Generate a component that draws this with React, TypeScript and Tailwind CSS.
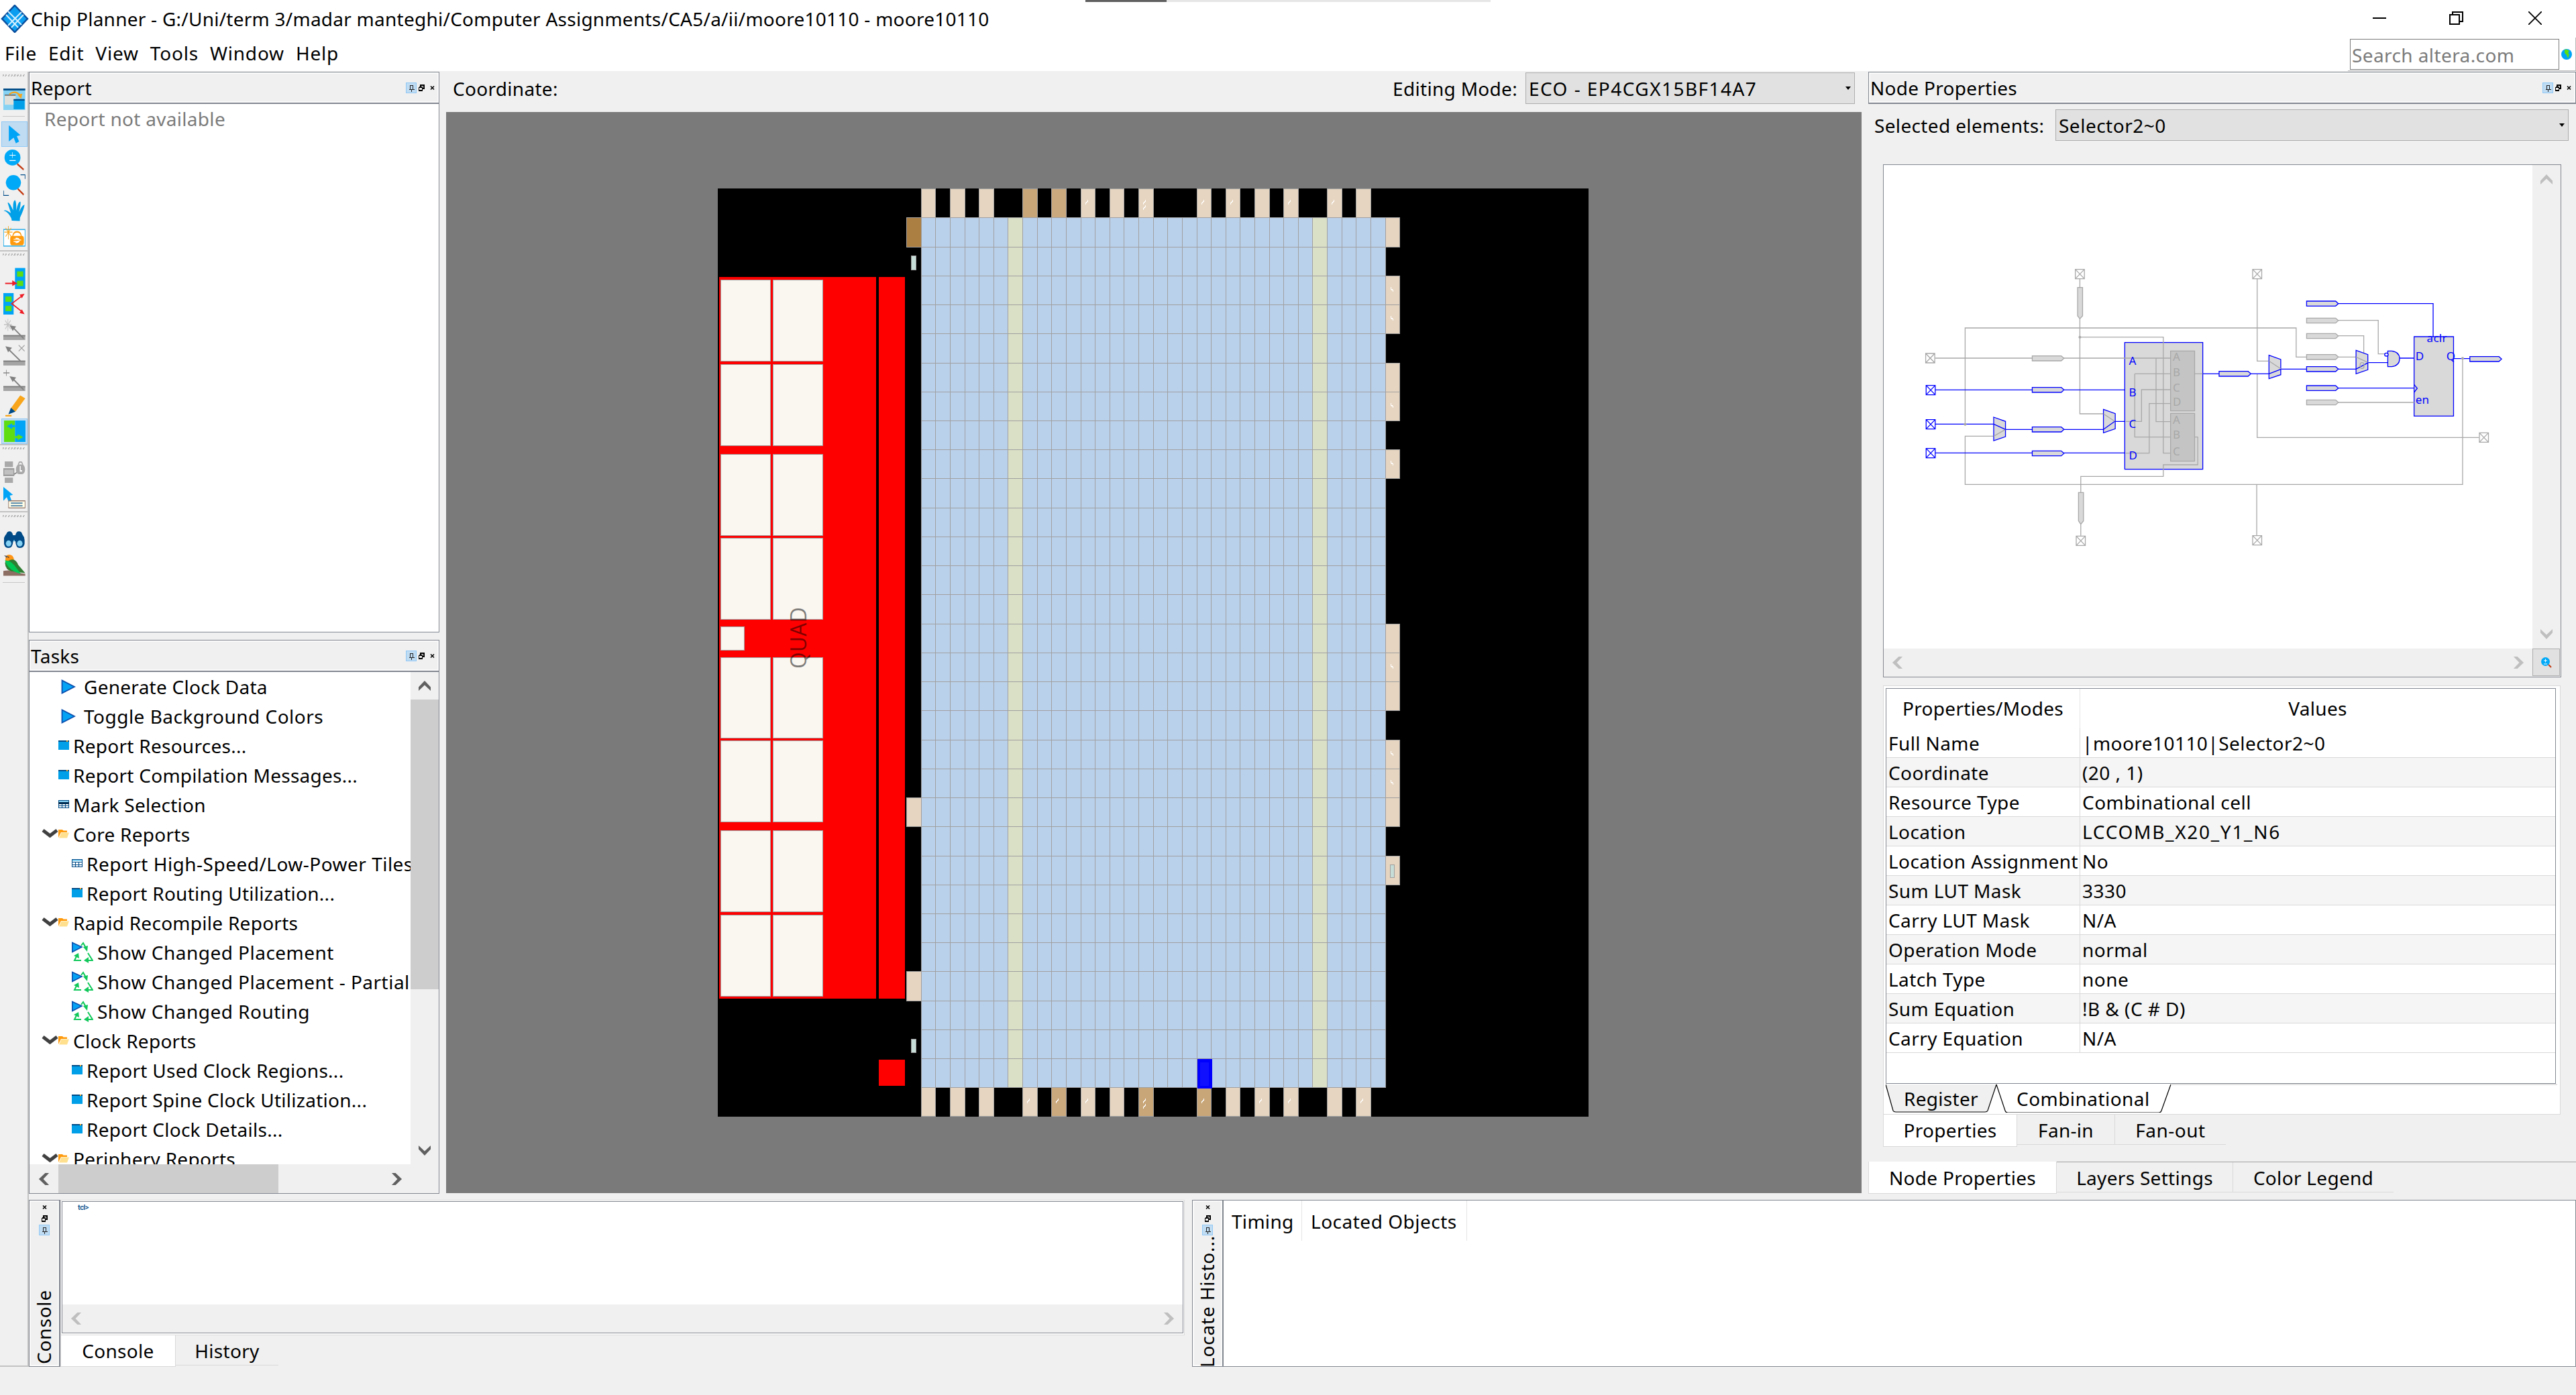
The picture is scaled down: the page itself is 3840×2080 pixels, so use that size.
import React from "react";

const GRAY = "#a0a0a0";

/* ---------- small shared glyphs ---------- */

function Chevron({ dir, color = "#606060", w = 18, h = 17 }: { dir: "up" | "down" | "left" | "right"; color?: string; w?: number; h?: number }) {
  const rot = { up: 0, right: 90, down: 180, left: 270 }[dir];
  return (
    <svg width={w} height={h} viewBox="0 0 18 18" preserveAspectRatio="none" className="shrink-0">
      <polygon points="0,11 9,1 18,11 18,17 9,8 0,17" fill={color} transform={`rotate(${rot} 9 9)`} />
    </svg>
  );
}

function PinIcon() {
  return (
    <span className="flex h-4 w-4 shrink-0 items-center justify-center border border-[#90c8f6] bg-[#c0dcf3]">
      <svg width="10" height="12" viewBox="0 0 10 12" shapeRendering="crispEdges">
        <path d="M3.5 8V2.500H7.500V8M1.500 8.500H9.500M5.500 8.500V12" stroke="#222" fill="none" />
      </svg>
    </span>
  );
}
function RestoreIcon() {
  return (
    <svg width="9" height="10" viewBox="0 0 9 10" className="shrink-0" shapeRendering="crispEdges">
      <path d="M3 3V1H8V6H6M3 1.500H8M0.500 4.500H5.500V9H0.500ZM0.500 4H5.500" stroke="#000" fill="none" strokeWidth="1.2" />
    </svg>
  );
}
function XIcon() {
  return (
    <svg width="7" height="6" viewBox="0 0 7 6" className="shrink-0">
      <path d="M1 .5L6 5.500M6 .5L1 5.500" stroke="#000" strokeWidth="1.500" />
    </svg>
  );
}

function DockHeader({ title }: { title: string }) {
  return (
    <div className="flex h-[47px] shrink-0 items-center border-b-2 border-[#828790] bg-[#f0f0f0] pr-[6px] pl-[2px] shadow-[inset_0_0_0_2px_#fafafa]">
      <span className="grow">{title}</span>
      <PinIcon />
      <span className="ml-[3px] flex"><RestoreIcon /></span>
      <span className="ml-[8px] flex"><XIcon /></span>
    </div>
  );
}

function VerticalTitle({ title }: { title: string }) {
  return (
    <div className="flex w-[46px] shrink-0 flex-col items-center border-r-2 border-[#828790] bg-[#f0f0f0] pt-[7px] pb-px shadow-[inset_0_0_0_2px_#fafafa]">
      <XIcon />
      <span className="mt-[9px] flex"><RestoreIcon /></span>
      <span className="mt-[4px] flex"><PinIcon /></span>
      <div className="mt-auto rotate-180 pt-[2px] pl-[3px] leading-[40px] tracking-[0.8px] [writing-mode:vertical-rl]">{title}</div>
    </div>
  );
}

/* ---------- left tool bar ---------- */

function Tool({ y, h = 57, on, children }: { y: number; h?: number; on?: boolean; children: React.ReactNode }) {
  return (
    <div className={on ? "ml-[2px] flex h-[38px] w-[39px] items-center justify-center border border-[#90c8f6] bg-[#c0dcf3]" : "ml-[2px] flex h-[38px] w-[39px] items-center justify-center"}>
      <svg width="33" height="32" viewBox={`15 ${y} 97 ${h}`} preserveAspectRatio="none">{children}</svg>
    </div>
  );
}
const Handle = () => (
  <div className="mx-[4px] h-[3px] shrink-0 bg-[repeating-linear-gradient(115deg,#b8b8b8_0px,#b8b8b8_2px,#f0f0f0_2px,#f0f0f0_4px)]" />
);

function ToolBar() {
  return (
    <div className="flex h-[1931px] w-[43px] shrink-0 flex-col border-r-2 border-b-2 border-[#c3c3c3] bg-[#f0f0f0]">
      <div className="h-[268px] border-b-2 border-[#c3c3c3] pt-[4px]">
        <Handle />
        <div className="mt-[15px]">
          <Tool y={57}>
            <rect x="15" y="57" width="96" height="57" fill="#85d2f4" />
            <rect x="15" y="57" width="96" height="5" fill="#004b87" />
            <rect x="21" y="74" width="48" height="26" fill="#dfe0dc" />
            <rect x="21" y="73" width="48" height="3" fill="#666" />
            <path d="M41 72Q66 60 92 76" stroke="#f8a51b" strokeWidth="4" fill="none" />
            <path d="M76 73L98 71L93 84Z" fill="#f8a51b" />
            <rect x="60" y="86" width="48" height="26" fill="#009fe8" />
            <rect x="60" y="85" width="48" height="4" fill="#004b87" />
          </Tool>
        </div>
        <div className="mx-[4px] mt-[6px] mb-[7px] h-px bg-[#c8c8c8]" />
        <Tool y={152} on>
          <path d="M39 157L90 183L74 186L84 200L70 205L60 190L39 200Z" fill="#00a4f6" />
        </Tool>
        <Tool y={217}>
          <ellipse cx="55" cy="240" rx="35" ry="21" fill="#00a9f8" />
          <path d="M55 226V241M42 234H69M42 248H69" stroke="#fff" strokeWidth="2" />
          <path d="M76 257L104 272" stroke="#c23a12" strokeWidth="5" />
        </Tool>
        <Tool y={287}>
          <ellipse cx="59" cy="309" rx="33" ry="20" fill="#00a9f8" />
          <path d="M78 325L104 341" stroke="#c23a12" strokeWidth="5" />
          <path d="M90 288H110V299M16 330V343H39" stroke="#004b87" strokeWidth="2.500" fill="none" />
        </Tool>
        <Tool y={354}>
          <path d="M52 409L50 403Q35 385 17 383Q22 378 48 389L34 362Q39 357 58 382Q56 356 66 355Q72 357 72 382Q80 357 90 359Q92 366 84 386Q98 367 108 367Q104 382 88 401L87 410Z" fill="#00a0e8" />
        </Tool>
        <Tool y={423}>
          <rect x="16" y="434" width="94" height="44" fill="#fff" stroke="#1ba8e8" strokeWidth="2.500" />
          <path d="M37 425V460M19 441H55M25 430L49 453M49 430L25 453" stroke="#f8a51b" strokeWidth="2.500" />
          <rect x="45" y="451" width="60" height="25" rx="8" fill="#ff9a0c" />
          <path d="M56 453Q58 440 75 440Q92 440 94 453" stroke="#ff9a0c" strokeWidth="4" fill="none" />
          <path d="M60 460H70V457Q84 456 86 462H93M60 466H70V469Q84 469 86 463" stroke="#fff" strokeWidth="2" fill="#fff" />
        </Tool>
      </div>
      <div className="h-[289px] border-b-2 border-[#c3c3c3] pt-[3px]">
        <Handle />
        <div className="h-[15px]" />
        <Tool y={532}>
          <rect x="66" y="533" width="45" height="57" fill="#00a4f6" />
          <rect x="75" y="542" width="27" height="14" fill="#5ede12" />
          <rect x="75" y="567" width="27" height="14" fill="#5ede12" />
          <path d="M23 574H60" stroke="#ee1c25" strokeWidth="3.500" />
          <path d="M54 566L76 574L54 581Z" fill="#ee1c25" />
        </Tool>
        <Tool y={600}>
          <rect x="15" y="600" width="45" height="57" fill="#00a4f6" />
          <rect x="24" y="609" width="27" height="14" fill="#5ede12" />
          <rect x="24" y="634" width="27" height="14" fill="#5ede12" />
          <path d="M98 607L52 628L98 650" stroke="#ee1c25" strokeWidth="3.500" fill="none" />
          <path d="M108 602L86 604L96 614ZM108 656L86 653L96 643Z" fill="#ee1c25" />
        </Tool>
        <Tool y={667}>
          <rect x="15" y="711" width="96" height="13" fill="#a5a5a5" />
          <rect x="15" y="711" width="96" height="3" fill="#7d7d7d" />
          <path d="M104 720L56 690" stroke="#808080" strokeWidth="4" />
          <path d="M42 685L71 688L56 700Z" fill="#808080" />
          <path d="M35 668V700M18 683H52M23 672L47 695M47 672L23 695" stroke="#c0c0c0" strokeWidth="2.500" />
        </Tool>
        <Tool y={735}>
          <rect x="15" y="779" width="96" height="14" fill="#a5a5a5" />
          <rect x="15" y="779" width="96" height="3" fill="#7d7d7d" />
          <path d="M90 780L36 748" stroke="#808080" strokeWidth="4" />
          <path d="M24 741L53 745L36 757Z" fill="#808080" />
          <path d="M82 738L108 754M108 738L82 754" stroke="#a0a0a0" strokeWidth="2.500" />
        </Tool>
        <Tool y={803}>
          <rect x="15" y="847" width="96" height="13" fill="#a5a5a5" />
          <rect x="15" y="847" width="96" height="3" fill="#7d7d7d" />
          <path d="M104 857L56 827" stroke="#808080" strokeWidth="4" />
          <path d="M42 821L71 824L56 836Z" fill="#808080" />
          <path d="M28 804V820M15 812H42" stroke="#888" strokeWidth="2.500" />
        </Tool>
        <Tool y={870}>
          <path d="M48 905L89 871L111 879L68 914Z" fill="#f8a51b" />
          <path d="M48 904L68 914L37 921Z" fill="#004b87" />
          <rect x="24" y="923" width="27" height="4" fill="#f8a51b" />
        </Tool>
        <Tool y={941} on>
          <rect x="18" y="941" width="48" height="57" fill="#5ede12" />
          <rect x="66" y="941" width="48" height="57" fill="#00a4f6" />
          <path d="M30 956L54 948V953H66V959H54V964Z" fill="#00a4f6" />
          <path d="M102 985L78 977V982H66V988H78V993Z" fill="#5ede12" />
        </Tool>
      </div>
      <div className="h-[100px] border-b-2 border-[#c3c3c3] pt-[3px]">
        <Handle />
        <div className="h-[15px]" />
        <Tool y={1049}>
          <rect x="21" y="1049" width="36" height="15" fill="#a9a9a9" />
          <rect x="21" y="1092" width="36" height="15" fill="#a9a9a9" />
          <rect x="17" y="1069" width="44" height="17" fill="#c0c0c0" stroke="#9a9a9a" strokeWidth="4" />
          <path d="M62 1083L78 1077" stroke="#808080" strokeWidth="3" />
          <rect x="70" y="1057" width="40" height="26" rx="13" fill="#a9a9a9" />
          <path d="M80 1060Q82 1050 90 1050Q98 1050 101 1060" stroke="#a9a9a9" strokeWidth="4" fill="none" />
          <path d="M89 1061V1074H97" stroke="#fff" strokeWidth="4" fill="none" />
        </Tool>
        <Tool y={1117}>
          <path d="M15 1117L57 1138L43 1140L51 1154L38 1156L30 1144L15 1154Z" fill="#00a4f6" />
          <rect x="38" y="1154" width="72" height="19" fill="#fffde8" stroke="#8d6e63" strokeWidth="2.500" />
          <path d="M48 1160H99M48 1167H99" stroke="#004b87" strokeWidth="2" />
        </Tool>
      </div>
      <div className="pt-[4px]">
        <Handle />
        <div className="h-[15px]" />
        <Tool y={1227}>
          <path d="M18 1262V1250Q22 1244 28 1240Q32 1233 42 1233Q54 1233 57 1243H68Q71 1233 83 1233Q95 1233 98 1241Q108 1248 108 1256V1266Q104 1277 86 1277Q70 1277 68 1259H58Q56 1277 38 1277Q22 1277 18 1266Z" fill="#004b87" />
          <ellipse cx="38" cy="1265" rx="12" ry="8" fill="#85d2f4" />
          <ellipse cx="87" cy="1265" rx="12" ry="8" fill="#85d2f4" />
          <circle cx="62" cy="1258" r="2.500" fill="#85d2f4" />
        </Tool>
        <Tool y={1297}>
          <path d="M15 1340Q50 1336 80 1345L111 1348V1353H15Z" fill="#8d6e63" />
          <path d="M24 1310Q24 1297 40 1297Q58 1297 62 1310L40 1325Q24 1325 24 1312Z" fill="#ff9414" />
          <path d="M18 1299L36 1301L30 1306Z" fill="#555" />
          <path d="M22 1318Q24 1338 50 1341L88 1344L111 1346L80 1324Q68 1306 46 1311Z" fill="#2e7d32" />
          <path d="M22 1312Q44 1312 62 1324L92 1348Q60 1344 38 1330Q26 1322 22 1312Z" fill="#00c853" />
          <circle cx="38" cy="1304" r="2" fill="#333" />
        </Tool>
      </div>
      <div className="mx-[4px] mt-[6px] h-px bg-[#c8c8c8]" />
    </div>
  );
}

/* ---------- tasks ---------- */

type Kind = "play" | "doc" | "table" | "darkTable" | "folder" | "recycle";
type Task = { kind: Kind; level: number; label: string; wide?: boolean };

const TASKS: Task[] = [
  { kind: "play", level: 0, label: "Generate Clock Data" },
  { kind: "play", level: 0, label: "Toggle Background Colors", wide: true },
  { kind: "doc", level: 0, label: "Report Resources..." },
  { kind: "doc", level: 0, label: "Report Compilation Messages..." },
  { kind: "darkTable", level: 0, label: "Mark Selection" },
  { kind: "folder", level: 0, label: "Core Reports" },
  { kind: "table", level: 1, label: "Report High-Speed/Low-Power Tiles", wide: true },
  { kind: "doc", level: 1, label: "Report Routing Utilization..." },
  { kind: "folder", level: 0, label: "Rapid Recompile Reports" },
  { kind: "recycle", level: 1, label: "Show Changed Placement", wide: true },
  { kind: "recycle", level: 1, label: "Show Changed Placement - Partial", wide: true },
  { kind: "recycle", level: 1, label: "Show Changed Routing", wide: true },
  { kind: "folder", level: 0, label: "Clock Reports" },
  { kind: "doc", level: 1, label: "Report Used Clock Regions..." },
  { kind: "doc", level: 1, label: "Report Spine Clock Utilization..." },
  { kind: "doc", level: 1, label: "Report Clock Details..." },
  { kind: "folder", level: 0, label: "Periphery Reports" },
];

function TaskIcon({ kind }: { kind: Kind }) {
  if (kind === "play")
    return (
      <svg width="32" height="24" viewBox="0 0 32 24">
        <path d="M5.500 2.500V21.500L24 12Z" fill="#06a3f5" stroke="#0b4fae" strokeWidth="1.800" />
      </svg>
    );
  if (kind === "doc")
    return (
      <svg width="16" height="16" viewBox="0 0 16 16" className="mb-[3px]">
        <rect y="1" width="16" height="14" fill="#009fe8" />
        <rect y="1" width="16" height="2" fill="#004b87" />
        <rect x="12" y="1" width="2" height="2" fill="#f8a51b" />
      </svg>
    );
  if (kind === "table" || kind === "darkTable")
    return (
      <svg width="16" height="14" viewBox="0 0 16 14" className="mb-[3px]" shapeRendering="crispEdges">
        <rect x=".5" y="1.500" width="15" height="11" fill="#fff" stroke="#004b87" />
        <rect x="1" y="2" width="14" height="2" fill="#85d2f4" />
        <path d="M0 5.500H16M0 9.500H16M5.500 5V13M10.500 5V13" stroke="#004b87" />
        {kind === "darkTable" && <rect x="0" y="4" width="16" height="3" fill="#002b50" />}
      </svg>
    );
  if (kind === "folder")
    return (
      <svg width="16" height="14" viewBox="0 0 16 14" className="mb-[2px]">
        <path d="M0 13V1H6L7.500 2.500H13V5H4Z" fill="#ff9a0c" />
        <path d="M1 13.500L4.500 5.500H16L13 13.500Z" fill="#ffe08f" />
      </svg>
    );
  return (
    <svg width="32" height="32" viewBox="0 0 32 32">
      <g stroke="#10c85a" strokeWidth="2" fill="none">
        <path d="M14 6L17 2L22 11M24 17L31 28H19M14 28H4L8 20" />
      </g>
      <path d="M17 8L24 6L23 15ZM25 23V32L18 28ZM3 21L10 17L11 25Z" fill="#10c85a" />
      <path d="M.8 1.500V15.500L15 8Z" fill="#06a3f5" stroke="#0b4fae" strokeWidth="1.600" />
    </svg>
  );
}

function TaskRow({ t }: { t: Task }) {
  return (
    <div className="flex h-[44px] shrink-0 items-center whitespace-pre">
      <span className={t.level ? "flex w-[63px] shrink-0" : "flex w-[43px] shrink-0 justify-end"}>
        {t.kind === "folder" && (
          <svg width="25" height="16" viewBox="0 0 25 16" className="mb-[2px]">
            <path d="M2 3L12.500 11L23 3" stroke="#404040" strokeWidth="5" fill="none" />
          </svg>
        )}
      </span>
      <span className="flex shrink-0"><TaskIcon kind={t.kind} /></span>
      <span className={t.wide ? "ml-[6px] tracking-[0.48px]" : "ml-[6px] tracking-[0.27px]"}>{t.label}</span>
    </div>
  );
}

function TasksDock() {
  return (
    <div className="mt-[11px] flex h-[826px] flex-col border border-[#828790] bg-[#f0f0f0]">
      <DockHeader title="Tasks" />
      <div className="flex h-[734px] shrink-0">
        <div className="flex w-[568px] shrink-0 flex-col overflow-hidden bg-white">
          {TASKS.map((t, i) => <TaskRow key={i} t={t} />)}
        </div>
        <div className="flex grow flex-col items-center justify-between bg-[#f0f0f0]">
          <span className="flex h-[41px] items-center"><Chevron dir="up" /></span>
          <div className="h-[432px] w-full bg-[#cdcdcd]" />
          <div className="grow" />
          <span className="flex h-[42px] items-center"><Chevron dir="down" /></span>
        </div>
      </div>
      <div className="flex grow items-center pr-[41px]">
        <span className="flex w-[43px] justify-center"><Chevron dir="left" w={17} h={18} /></span>
        <div className="h-full w-[328px] bg-[#cdcdcd]" />
        <div className="grow" />
        <span className="flex w-[43px] justify-center"><Chevron dir="right" w={17} h={18} /></span>
      </div>
    </div>
  );
}

/* ---------- chip floor plan ---------- */

const COL = 21.62;
const ROW = 43.235;
const cx = (i: number) => Math.floor(303.25 + COL * i);
const ry = (i: number) => Math.floor(43.84 + ROW * i);
const LIGHT = "#e6d5c0";
const TAN = "#c8a678";

const TOP: [number, string, number][] = [[0, LIGHT, 0], [2, LIGHT, 0], [4, LIGHT, 0], [7, TAN, 0], [9, "#cba97e", 0], [11, LIGHT, 1], [13, LIGHT, 0], [15, LIGHT, 2], [19, LIGHT, 1], [21, LIGHT, 1], [23, LIGHT, 0], [25, LIGHT, 1], [28, LIGHT, 1], [30, LIGHT, 0]];
const BOTTOM: [number, string, number][] = [[0, LIGHT, 0], [2, LIGHT, 0], [4, LIGHT, 0], [7, LIGHT, 1], [9, "#cba97e", 1], [11, LIGHT, 1], [13, LIGHT, 0], [15, TAN, 2], [19, TAN, 1], [21, LIGHT, 0], [23, LIGHT, 1], [25, LIGHT, 1], [28, LIGHT, 0], [30, LIGHT, 1]];
const RIGHT: [number, number][] = [[0, 0], [2, 1], [3, 1], [5, 0], [6, 1], [8, 1], [14, 0], [15, 1], [16, 0], [18, 1], [19, 1], [20, 0], [22, 0]];
const CELL_ROWS: [number, number][] = [[136, 122], [262, 122], [396, 122], [521, 122], [699, 121], [823, 122], [957, 122], [1083, 122]];

function Tick({ x, y, flip }: { x: number; y: number; flip?: boolean }) {
  return <path d={flip ? `M${x - 1.5} ${y - 3}v3l3 2v2` : `M${x + 1.5} ${y - 3}v3l-3 2v2`} stroke="#fff" strokeWidth="1.500" fill="none" />;
}

function Chip() {
  const box = (x0: number, y0: number, x1: number, y1: number, fill: string, key?: React.Key) => (
    <rect key={key} x={x0 + 0.5} y={y0 + 0.5} width={x1 - x0} height={y1 - y0} fill={fill} stroke={GRAY} />
  );
  return (
    <svg width="1298" height="1384" viewBox="0 0 1298 1384" shapeRendering="crispEdges" className="shrink-0">
      <rect width="1298" height="1384" fill="#000" />
      <rect x="2" y="132" width="234" height="1076" fill="#f00" />
      <rect x="240" y="132" width="39" height="1076" fill="#f00" />
      <rect x="240" y="1299" width="39" height="39" fill="#f00" />
      {CELL_ROWS.map(([y, h]) => [4, 82].map((x) => box(x, y, x + 74, y + h - 1, "#faf6f0", `${x}-${y}`)))}
      {box(4, 653, 39, 688, "#faf6f0")}
      <rect x={cx(0)} y={ry(0)} width={cx(32) - cx(0)} height={ry(30) - ry(0)} fill="#bad1ec" />
      {[6, 27].map((c) => <rect key={c} x={cx(c)} y={ry(0)} width={cx(c + 1) - cx(c)} height={ry(30) - ry(0)} fill="#dae0c6" />)}
      {TOP.map(([c, f]) => box(cx(c), 0, cx(c + 1), ry(0), f, c))}
      {BOTTOM.map(([c, f]) => box(cx(c), ry(30), cx(c + 1), 1383, f, c))}
      {RIGHT.map(([r]) => box(cx(32), ry(r), cx(33), ry(r + 1), LIGHT, r))}
      {box(281, ry(0), cx(0), ry(1), "#ab7e41")}
      {box(281, ry(20), cx(0), ry(21), LIGHT)}
      {box(281, ry(26), cx(0), ry(27), LIGHT)}
      {box(288, 100, 295, 121, "#c6ddd8")}
      {box(288, 1268, 295, 1288, "#c6ddd8")}
      {box(1002, 1008, 1008, 1027, "#c6dcd6")}
      {Array.from({ length: 33 }, (_, i) => <rect key={i} x={cx(i)} y={ry(0)} width="1" height={ry(30) - ry(0) + 1} fill={GRAY} />)}
      {Array.from({ length: 31 }, (_, i) => <rect key={i} x={cx(0)} y={ry(i)} width={cx(32) - cx(0) + 1} height="1" fill={GRAY} />)}
      <rect x={cx(19) + 1} y="1298" width="22" height="44" fill="#00f" />
      <rect x={cx(19) + 5} y="1303" width="13" height="35" fill="#1010ff" />
      {TOP.flatMap(([c, , n]) => Array.from({ length: n }, (_, k) => <Tick key={`${c}-${k}`} x={cx(c) + 9} y={19.5 + 8 * k} />))}
      {BOTTOM.flatMap(([c, , n]) => Array.from({ length: n }, (_, k) => <Tick key={`${c}-${k}`} x={cx(c) + 9} y={1359.5 + 8 * k} />))}
      {RIGHT.filter(([, n]) => n).map(([r]) => <Tick key={r} x={cx(32) + 10} y={ry(r) + 20} flip />)}
      <text x="0" y="0" transform="translate(132 716) rotate(-90)" fill="#000" fillOpacity=".5" fontSize="33" fontFamily="Open Sans" textLength="92" lengthAdjust="spacingAndGlyphs">QUAD</text>
    </svg>
  );
}

/* ---------- schematic ---------- */

const BLUE = "#0000ff";
const SG = "#a8a8a8";

function Schematic() {
  const tag = (x: number, y: number, c: string, w = 56) => (
    <path key={`${x}-${y}`} d={`M${x} ${y - 11}H${x + w + 8}L${x + w + 14} ${y}L${x + w + 8} ${y + 11}H${x}Z`} fill="#d9d9d9" stroke={c} />
  );
  const pin = (x: number, y: number, c: string) => (
    <path key={`${x}-${y}`} d={`M${x - 10} ${y - 21}H${x + 10}V${y + 21}H${x - 10}ZL${x + 10} ${y + 21}M${x + 10} ${y - 21}L${x - 10} ${y + 21}`} fill="none" stroke={c} />
  );
  const mux = (x: number, y: number) => (
    <path key={`${x}-${y}`} d={`M${x} ${y}L${x + 26} ${y + 19}V${y + 87}L${x} ${y + 105}Z`} fill="#d9d9d9" stroke={BLUE} />
  );
  const label = (x: number, y: number, s: string, c: string, size = 17) => (
    <text key={s + x + y} x={-28 + x * 0.676} y={114 + y / 3} fill={c} fontSize={size} fontFamily="Noto Sans">{s}</text>
  );
  return (
    <svg width="967" height="721" viewBox="0 0 967 721" className="shrink-0 bg-white">
      <g transform="translate(-28 114) scale(0.676 0.33333)" strokeWidth="1.300" className="*:[vector-effect:non-scaling-stroke]">
        {pin(474, 146, SG)}{pin(865, 146, SG)}{pin(144, 522, SG)}{pin(1365, 877, SG)}{pin(476, 1339, SG)}{pin(865, 1337, SG)}
        {pin(145, 665, BLUE)}{pin(145, 818, BLUE)}{pin(145, 947, BLUE)}
        <rect x="573" y="452" width="172" height="567" fill="#d9d9d9" stroke={BLUE} />
        <rect x="1211" y="426" width="87" height="355" fill="#d9d9d9" stroke={BLUE} />
        <rect x="674" y="490" width="53" height="268" fill="#c4c4c4" stroke={SG} />
        <rect x="674" y="769" width="53" height="214" fill="#c4c4c4" stroke={SG} />
        <path d="M469 206H480V333L474 346L469 333ZM471 1123H482V1250L476 1265L471 1250Z" fill="#d9d9d9" stroke={SG} />
        <path d="M474 167V206M474 346V771H526M474 428H658V947H674M155 522H674M642 522V806H674M221 818V387H951V517H974M865 167V535H891M865 592V877H1354M1042 353H1132V503H1150M1042 422H1100V500M1042 517H1083M1042 720H1211M284 871H221V1087H1318V523M864 1087V1316M476 1265V1316M476 1123V1051H658V999H734V875H727M727 592H745M595 592H674M595 592V875H674M575 805H610V663H674M575 947H627V725H674" fill="none" stroke={SG} />
        <path d="M155 664H573M155 817H284M310 841H526M551 805H573M155 946H573M745 592H891M918 571H1083M1110 542H1153M1179 522H1211M1298 524H1334M1042 278H1253V426M1042 656H1211" fill="none" stroke={BLUE} />
        {mux(284, 786)}{mux(526, 751)}{mux(891, 509)}{mux(1083, 487)}
        <path d="M1153 490H1162Q1179 495 1179 524Q1179 555 1162 560H1153Z" fill="#d9d9d9" stroke={BLUE} />
        <ellipse cx="1150" cy="506" rx="4" ry="7" fill="#fff" stroke={BLUE} />
        <path d="M1211 640L1218 657L1211 675" fill="none" stroke={BLUE} />
        <path d="M284 871L310 841M526 771L551 805M891 535L918 571M1083 517L1110 542" stroke={SG} fill="none" />
        <path d="M284 817L310 841M526 841L551 805M891 592L918 571M1083 571L1110 542" stroke={BLUE} fill="none" />
        {tag(369, 523, SG)}{tag(974, 354, SG)}{tag(974, 423, SG)}{tag(974, 517, SG)}{tag(974, 720, SG)}
        {tag(369, 664, BLUE)}{tag(369, 841, BLUE)}{tag(369, 948, BLUE)}{tag(781, 592, BLUE)}{tag(974, 278, BLUE)}{tag(974, 571, BLUE)}{tag(974, 656, BLUE)}{tag(1334, 526, BLUE)}
        <ellipse cx="474" cy="428" rx="3" ry="6" fill={SG} />
        <ellipse cx="221" cy="818" rx="3" ry="6" fill={SG} />
        <ellipse cx="1318" cy="523" rx="3" ry="6" fill={SG} />
      </g>
      {label(582, 551, "A", BLUE)}{label(582, 692, "B", BLUE)}{label(582, 833, "C", BLUE)}{label(582, 974, "D", BLUE)}
      {label(679, 533, "A", SG)}{label(679, 602, "B", SG)}{label(679, 673, "C", SG)}{label(679, 735, "D", SG)}
      {label(679, 815, "A", SG)}{label(679, 883, "B", SG)}{label(679, 956, "C", SG)}
      {label(1239, 451, "aclr", BLUE)}{label(1214, 530, "D", BLUE)}{label(1282, 530, "Q", BLUE)}{label(1214, 726, "en", BLUE)}
      {label(1090, 570, "0", SG, 15)}
    </svg>
  );
}

/* ---------- node properties ---------- */

const PROPS: [string, string][] = [
  ["Full Name", "|moore10110|Selector2~0"],
  ["Coordinate", "(20 , 1)"],
  ["Resource Type", "Combinational cell"],
  ["Location", "LCCOMB_X20_Y1_N6"],
  ["Location Assignment", "No"],
  ["Sum LUT Mask", "3330"],
  ["Carry LUT Mask", "N/A"],
  ["Operation Mode", "normal"],
  ["Latch Type", "none"],
  ["Sum Equation", "!B & (C # D)"],
  ["Carry Equation", "N/A"],
];

function Combo({ value, className }: { value: string; className: string }) {
  return (
    <div className={`flex h-[47px] items-center justify-between border border-[#adadad] bg-[#e1e1e1] pr-[5px] pl-[4px] ${className}`}>
      <span>{value}</span>
      <svg width="8" height="5" viewBox="0 0 8 5"><path d="M0 0H8L4 5Z" fill="#000" /></svg>
    </div>
  );
}

function NodeProperties() {
  return (
    <div className="flex w-[1055px] shrink-0 flex-col">
      <div className="border border-b-0 border-[#828790]"><DockHeader title="Node Properties" /></div>
      <div className="mt-[8px] flex items-center pl-[9px]">
        <span className="w-[270px] tracking-[0.35px]">Selected elements:</span>
        <Combo value="Selector2~0" className="w-[765px] tracking-[0.5px]" />
      </div>
      <div className="mt-[35px] ml-[22px] flex h-[765px] w-[1011px] flex-col border border-[#828790] bg-[#f0f0f0]">
        <div className="flex h-[721px]">
          <Schematic />
          <div className="flex grow flex-col items-center justify-between pt-[13px] pb-[13px]">
            <Chevron dir="up" color="#bfbfbf" /><Chevron dir="down" color="#bfbfbf" />
          </div>
        </div>
        <div className="flex grow">
          <div className="flex w-[967px] items-center justify-between px-[12px]">
            <Chevron dir="left" color="#bfbfbf" w={17} h={18} /><Chevron dir="right" color="#bfbfbf" w={17} h={18} />
          </div>
          <div className="flex h-[41px] w-[41px] items-center justify-center border border-[#adadad] bg-[#e1e1e1]">
            <svg width="16" height="16" viewBox="0 0 16 16">
              <circle cx="6.500" cy="6.500" r="6.500" fill="#00a9f8" />
              <path d="M6.500 2.500V7.500M4 5H9M4 10H9" stroke="#fff" />
              <path d="M11 11L15 15" stroke="#c23a12" strokeWidth="2" />
            </svg>
          </div>
        </div>
      </div>
      <div className="mt-[12px] ml-[22px] flex h-[640px] w-[1010px] flex-col border border-[#d9d9d9] bg-white pt-[3px] pl-[3px]">
        <div className="flex h-[590px] w-[999px] flex-col border border-[#828790] bg-white">
          <div className="flex h-[59px] shrink-0 text-center leading-[58px]">
            <span className="w-[289px] border-r border-[#e5e5e5]">Properties/Modes</span>
            <span className="grow">Values</span>
          </div>
          {PROPS.map(([k, v], i) => (
            <div key={k} className={i % 2 ? "flex h-[44px] shrink-0 border-b border-[#d9d9d9] bg-[#f5f5f5] leading-[45px]" : "flex h-[44px] shrink-0 border-b border-[#d9d9d9] leading-[45px]"}>
              <span className="w-[289px] border-r border-[#d9d9d9] pl-[3px] tracking-[0.4px] whitespace-nowrap">{k}</span>
              <span className={v.startsWith("LCC") ? "pl-[3px] tracking-[1.7px]" : "pl-[3px] tracking-[0.45px]"}>{v}</span>
            </div>
          ))}
        </div>
        <div className="relative flex h-[43px] items-center">
          <svg width="1005" height="43" className="absolute top-0 left-0">
            <path d="M426 1H1001" stroke="#d9d9d9" strokeWidth="1.500" />
            <path d="M0 1L11 40Q12 42 15 42H148Q151 42 152 40L165 1" fill="#f0f0f0" stroke="#000" strokeWidth="1.200" />
            <path d="M165 1L178 40Q179 43 182 43H407Q410 43 411 40L425 1" fill="#fff" stroke="#000" strokeWidth="1.200" />
          </svg>
          <span className="relative w-[168px] pl-[27px]">Register</span>
          <span className="relative pl-[27px] tracking-[0.45px]">Combinational</span>
        </div>
      </div>
      <div className="ml-[22px] flex h-[48px] items-start leading-[47px]">
        <span className="h-[48px] w-[200px] border border-t-0 border-[#d9d9d9] bg-white text-center">Properties</span>
        <span className="h-[45px] w-[146px] border-r border-b border-[#d9d9d9] text-center">Fan-in</span>
        <span className="h-[45px] w-[165px] border-b border-[#d9d9d9] text-center tracking-[0.5px]">Fan-out</span>
      </div>
      <div className="mt-auto flex h-[48px] items-start leading-[48px]">
        <span className="h-[48px] w-[281px] border border-t-0 border-[#d9d9d9] bg-white text-center">Node Properties</span>
        <div className="flex grow border-t border-[#a0a0a0]">
          <span className="h-[45px] w-[263px] border-r border-b border-[#d9d9d9] text-center leading-[46px]">Layers Settings</span>
          <span className="h-[45px] w-[239px] border-b border-[#d9d9d9] text-center leading-[46px]">Color Legend</span>
        </div>
      </div>
    </div>
  );
}

/* ---------- frame ---------- */

function TitleBar() {
  return (
    <div className="h-[106px] shrink-0 bg-white">
      <div className="relative flex h-[56px] items-center">
        <div className="absolute top-0 left-[1618px] flex h-[3px]">
          <div className="w-[121px] bg-[#606060]" /><div className="w-[483px] bg-[#e6e6e6]" />
        </div>
        <svg width="44" height="42" viewBox="0 0 44 42">
          <path d="M22 1L41 21L22 41L3 21Z" fill="#0b9ef0" stroke="#0a4f9e" strokeWidth="2.500" />
          <path d="M12 10L32 30M32 11L12 31M9 15L27 34M35 15L17 34" stroke="#d5f0ff" strokeWidth="2" />
        </svg>
        <span className="pl-[2px] tracking-[0.25px]">Chip Planner - G:/Uni/term 3/madar manteghi/Computer Assignments/CA5/a/ii/moore10110 - moore10110</span>
        <div className="mt-[-3px] mr-[51px] ml-auto flex items-center">
          <svg width="20" height="20" viewBox="0 0 20 20"><path d="M0 10H20" stroke="#000" strokeWidth="2" /></svg>
          <svg width="21" height="20" viewBox="0 0 21 20" className="ml-[94px]" shapeRendering="crispEdges"><path d="M1 5H15V19H1ZM5 5V1H20V15H15" fill="none" stroke="#000" strokeWidth="2" /></svg>
          <svg width="20" height="20" viewBox="0 0 20 20" className="ml-[97px]"><path d="M0 0L20 20M20 0L0 20" stroke="#000" strokeWidth="1.800" /></svg>
        </div>
      </div>
      <div className="flex h-[50px] items-center">
        <div className="mt-[-4px] flex gap-[17px] pl-[7px] tracking-[0.8px]">
          {["File", "Edit", "View", "Tools", "Window", "Help"].map((m) => <span key={m}>{m}</span>)}
        </div>
        <div className="ml-auto flex h-[50px] w-[340px] items-center border-r border-b border-[#b8b8b8] pl-[3px]">
          <div className="flex h-[46px] w-[312px] items-center border border-[#7a7a7a] pl-[2px] tracking-[0.4px] text-[#7b7b7b]"><span className="mt-[2px]">Search altera.com</span></div>
          <svg width="16" height="16" viewBox="0 0 16 16" className="ml-[3px]">
            <circle cx="8" cy="8" r="8" fill="#00a4f6" />
            <path d="M5 1Q9 0 12 3L10 6L12 8L10 14L8 9L5 6Z" fill="#5ede12" />
          </svg>
        </div>
      </div>
    </div>
  );
}

function BottomDocks() {
  return (
    <div className="flex h-[249px] w-[3797px]">
      <div className="flex w-[47px] border border-r-0 border-[#828790]"><VerticalTitle title="Console" /></div>
      <div className="flex w-[1676px] flex-col">
        <div className="h-[202px] border border-[#d9d9d9] bg-white p-px">
          <div className="flex h-[197px] flex-col border border-[#828790] bg-white">
            <div className="grow pt-[3px] pl-[23px] font-['Roboto'] text-[11px] leading-[11px] font-medium tracking-[-0.5px] text-[#004b87]">tcl&gt;</div>
            <div className="flex h-[42px] items-center justify-between bg-[#f0f0f0] px-[12px]">
              <Chevron dir="left" color="#bfbfbf" w={17} h={18} /><Chevron dir="right" color="#bfbfbf" w={17} h={18} />
            </div>
          </div>
        </div>
        <div className="flex items-start leading-[46px]">
          <span className="h-[47px] w-[172px] border border-t-0 border-[#d9d9d9] bg-white text-center">Console</span>
          <span className="h-[45px] w-[153px] border-b border-[#d9d9d9] text-center">History</span>
        </div>
      </div>
      <div className="ml-auto flex w-[2063px] border border-[#828790] bg-white">
        <VerticalTitle title="Locate Histo..." />
        <span className="h-[60px] w-[117px] border-r border-[#e5e5e5] pl-[12px] leading-[62px]">Timing</span>
        <span className="h-[60px] w-[246px] border-r border-[#e5e5e5] pl-[13px] leading-[62px] tracking-[0.5px]">Located Objects</span>
      </div>
    </div>
  );
}

export default function App() {
  return (
    <div className="flex h-[2080px] w-[3840px] flex-col overflow-hidden bg-[#f0f0f0] font-['Noto_Sans',sans-serif] text-[28px] leading-[38px] tracking-[0.3px] whitespace-nowrap text-black">
      <TitleBar />
      <div className="flex pt-px">
        <ToolBar />
        <div className="flex w-[3797px] flex-col">
          <div className="flex h-[1673px]">
            <div className="w-[612px] shrink-0">
              <div className="flex h-[836px] flex-col border border-[#828790] bg-white">
                <DockHeader title="Report" />
                <span className="pt-[3px] pl-[22px] text-[#7b7b7b]">Report not available</span>
              </div>
              <TasksDock />
            </div>
            <div className="ml-[10px] flex w-[2110px] shrink-0 flex-col">
              <div className="flex h-[60px] items-start">
                <span className="pt-[6px] pl-[10px]">Coordinate:</span>
                <span className="mr-[12px] ml-auto pt-[6px]">Editing Mode:</span>
                <Combo value="ECO - EP4CGX15BF14A7" className="mt-px mr-[10px] w-[491px] tracking-[1.45px]" />
              </div>
              <div className="flex h-[1612px] justify-center bg-[#7a7a7a] pt-[114px] pr-[2px]"><Chip /></div>
            </div>
            <div className="ml-[10px] flex"><NodeProperties /></div>
          </div>
          <div className="pt-[9px]"><BottomDocks /></div>
        </div>
      </div>
    </div>
  );
}
